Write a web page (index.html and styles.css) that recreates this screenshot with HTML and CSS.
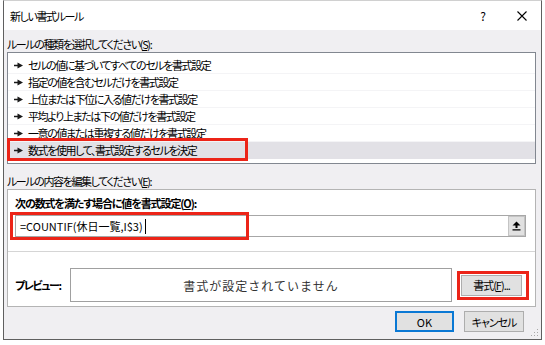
FILE: index.html
```html
<!DOCTYPE html>
<html lang="ja">
<head>
    <meta charset="UTF-8">
    <meta name="viewport" content="width=device-width, initial-scale=1.0">
    <title>新しい書式ルール</title>
    <link rel="stylesheet" href="styles.css">
</head>
<body>
    <div class="dialog">
        <div class="titlebar">
            <span class="title">新しい書式ルール</span>
            <span class="help">?</span>
            <span class="close">
                <svg width="10" height="10" viewBox="0 0 10 10"><path d="M0.5 0.5L9.5 9.5M9.5 0.5L0.5 9.5" stroke="#000" stroke-width="1.1" fill="none"/></svg>
            </span>
        </div>
        <div class="content">
            <div class="caption">ルールの種類を選択してください(<u>S</u>):</div>
            <ul class="rule-list">
                <li><svg class="arrow" width="9" height="7" viewBox="0 0 9 7"><path d="M0 2.8H4V4.2H0Z M3.5 0.5L9 3.5L3.5 6.5Z" fill="#1a1a1a"/></svg>セルの値に基づいてすべてのセルを書式設定</li>
                <li><svg class="arrow" width="9" height="7" viewBox="0 0 9 7"><path d="M0 2.8H4V4.2H0Z M3.5 0.5L9 3.5L3.5 6.5Z" fill="#1a1a1a"/></svg>指定の値を含むセルだけを書式設定</li>
                <li><svg class="arrow" width="9" height="7" viewBox="0 0 9 7"><path d="M0 2.8H4V4.2H0Z M3.5 0.5L9 3.5L3.5 6.5Z" fill="#1a1a1a"/></svg>上位または下位に入る値だけを書式設定</li>
                <li><svg class="arrow" width="9" height="7" viewBox="0 0 9 7"><path d="M0 2.8H4V4.2H0Z M3.5 0.5L9 3.5L3.5 6.5Z" fill="#1a1a1a"/></svg>平均より上または下の値だけを書式設定</li>
                <li><svg class="arrow" width="9" height="7" viewBox="0 0 9 7"><path d="M0 2.8H4V4.2H0Z M3.5 0.5L9 3.5L3.5 6.5Z" fill="#1a1a1a"/></svg>一意の値または重複する値だけを書式設定</li>
                <li class="selected"><svg class="arrow" width="9" height="7" viewBox="0 0 9 7"><path d="M0 2.8H4V4.2H0Z M3.5 0.5L9 3.5L3.5 6.5Z" fill="#1a1a1a"/></svg>数式を使用して、書式設定するセルを決定<span class="mark mark-rule"></span></li>
            </ul>
            <div class="caption caption-edit">ルールの内容を編集してください(<u>E</u>):</div>
            <div class="panel">
                <div class="formula-area">
                    <div class="formula-label">次の数式を満たす場合に値を書式設定(<u>O</u>):</div>
                    <div class="formula-row">
                        <div class="formula-input">
                            <span class="formula-text">=COUNTIF(休日一覧,I$3)</span><span class="caret"></span>
                            <span class="collapse">
                                <svg width="9" height="10" viewBox="0 0 9 10"><path d="M4.5 0.5L8.5 4.5H5.5V7H3.5V4.5H0.5Z M0.5 8.2H8.5V9.4H0.5Z" fill="#000"/></svg>
                            </span>
                        </div>
                        <span class="mark mark-formula"></span>
                    </div>
                </div>
                <div class="preview-area">
                    <span class="preview-label">プレビュー:</span>
                    <div class="preview-box">書式が設定されていません</div>
                    <div class="format-wrap">
                        <button class="btn btn-format">書式(<u>F</u>)...</button>
                        <span class="mark mark-format"></span>
                    </div>
                </div>
            </div>
            <div class="footer">
                <button class="btn btn-ok">OK</button>
                <button class="btn btn-cancel">キャンセル</button>
            </div>
        </div>
        <svg class="grip" width="8" height="8" viewBox="0 0 8 8">
            <rect x="6" y="0" width="1" height="1" fill="#a8a8a8"/>
            <rect x="3" y="3" width="1" height="1" fill="#a8a8a8"/>
            <rect x="6" y="3" width="1" height="1" fill="#a8a8a8"/>
            <rect x="0" y="6" width="1" height="1" fill="#a8a8a8"/>
            <rect x="3" y="6" width="1" height="1" fill="#a8a8a8"/>
            <rect x="6" y="6" width="1" height="1" fill="#a8a8a8"/>
        </svg>
    </div>
</body>
</html>
```

FILE: styles.css
```css
body {
    margin: 0;
    background: #fff;
    font-family: "Noto Sans CJK JP", "Noto Sans", sans-serif;
    font-size: 11px;
    letter-spacing: -1.4px;
    color: #000;
    font-feature-settings: "palt";
}
.dialog {
    position: relative;
    box-sizing: border-box;
    width: 539px;
    height: 340px;
    margin-left: 3px;
    border: 1px solid #5f5f5f;
    border-top-color: #d0d0d0;
    background: #f0eff2;
}
.titlebar {
    display: flex;
    align-items: center;
    height: 29px;
    padding: 0 9px 0 6px;
    background: #fff;
}
.title {
    flex: 1;
}
.help {
    width: 20px;
    text-align: center;
    font-size: 12px;
    letter-spacing: 0;
}
.close {
    display: flex;
    justify-content: center;
    width: 20px;
    margin-left: 19px;
}
.content {
    padding: 0 5px 0 3px;
}
.caption {
    padding-top: 6px;
    line-height: 16px;
}
.caption-edit {
    padding-top: 9px;
}
.rule-list {
    list-style: none;
    margin: 0;
    padding: 4px 0;
    background: #fff;
    border: 1px solid #828790;
}
.rule-list li {
    position: relative;
    display: flex;
    align-items: center;
    box-sizing: border-box;
    height: 17px;
    padding-left: 6px;
    border-bottom: 1px solid #f4f4f6;
}
.rule-list li.selected {
    background: #e2e1e6;
    border-bottom-color: #e2e1e6;
}
.arrow {
    margin-right: 5px;
}
.mark {
    position: absolute;
    box-sizing: border-box;
    border: 3px solid #ec2418;
}
.mark-rule {
    left: -1px;
    top: -4px;
    width: 241px;
    height: 23px;
}
.panel {
    background: #fff;
    border: 1px solid #b4b4b4;
}
.formula-area {
    padding: 5px 9px 14px 7px;
    border-bottom: 1px solid #d5d5d5;
}
.formula-label {
    font-weight: bold;
    line-height: 16px;
    margin-bottom: 4px;
    letter-spacing: -1.1px;
}
.formula-row {
    position: relative;
}
.formula-input {
    display: flex;
    align-items: center;
    box-sizing: border-box;
    height: 22px;
    padding-left: 4px;
    border: 1px solid #a7a7a7;
    letter-spacing: 0;
}
.caret {
    width: 1px;
    height: 15px;
    margin-left: 2px;
    background: #000;
}
.collapse {
    display: flex;
    align-items: center;
    justify-content: center;
    box-sizing: border-box;
    width: 17px;
    height: 20px;
    margin-left: auto;
    background: #e1e1e1;
    border: 1px solid #c4c4c4;
}
.mark-formula {
    left: -5px;
    top: -3px;
    width: 239px;
    height: 28px;
}
.preview-area {
    display: flex;
    align-items: center;
    padding: 16px 13px 4px 7px;
}
.preview-label {
    width: 55px;
    font-weight: bold;
    white-space: nowrap;
}
.preview-box {
    display: flex;
    align-items: center;
    justify-content: center;
    box-sizing: border-box;
    width: 382px;
    height: 34px;
    border: 1px solid #a0a0a0;
    color: #333;
    font-size: 12px;
    letter-spacing: 1px;
    font-feature-settings: normal;
}
.format-wrap {
    position: relative;
    margin-left: 9px;
}
.btn {
    box-sizing: border-box;
    height: 21px;
    padding: 0;
    background: #e1e1e1;
    border: 1px solid #adadad;
    font-family: inherit;
    font-size: 11px;
    letter-spacing: -1px;
    color: #000;
    white-space: nowrap;
    font-feature-settings: "palt";
}
.btn-format {
    display: block;
    width: 61px;
}
.mark-format {
    left: -4px;
    top: -4px;
    width: 72px;
    height: 29px;
}
.footer {
    display: flex;
    justify-content: flex-end;
    gap: 10px;
    padding: 4px 12px 0 0;
}
.btn-ok {
    width: 59px;
    border: 2px solid #0a78d4;
    letter-spacing: 0;
}
.btn-cancel {
    width: 60px;
}
.grip {
    position: absolute;
    right: 2px;
    bottom: 2px;
}
```
